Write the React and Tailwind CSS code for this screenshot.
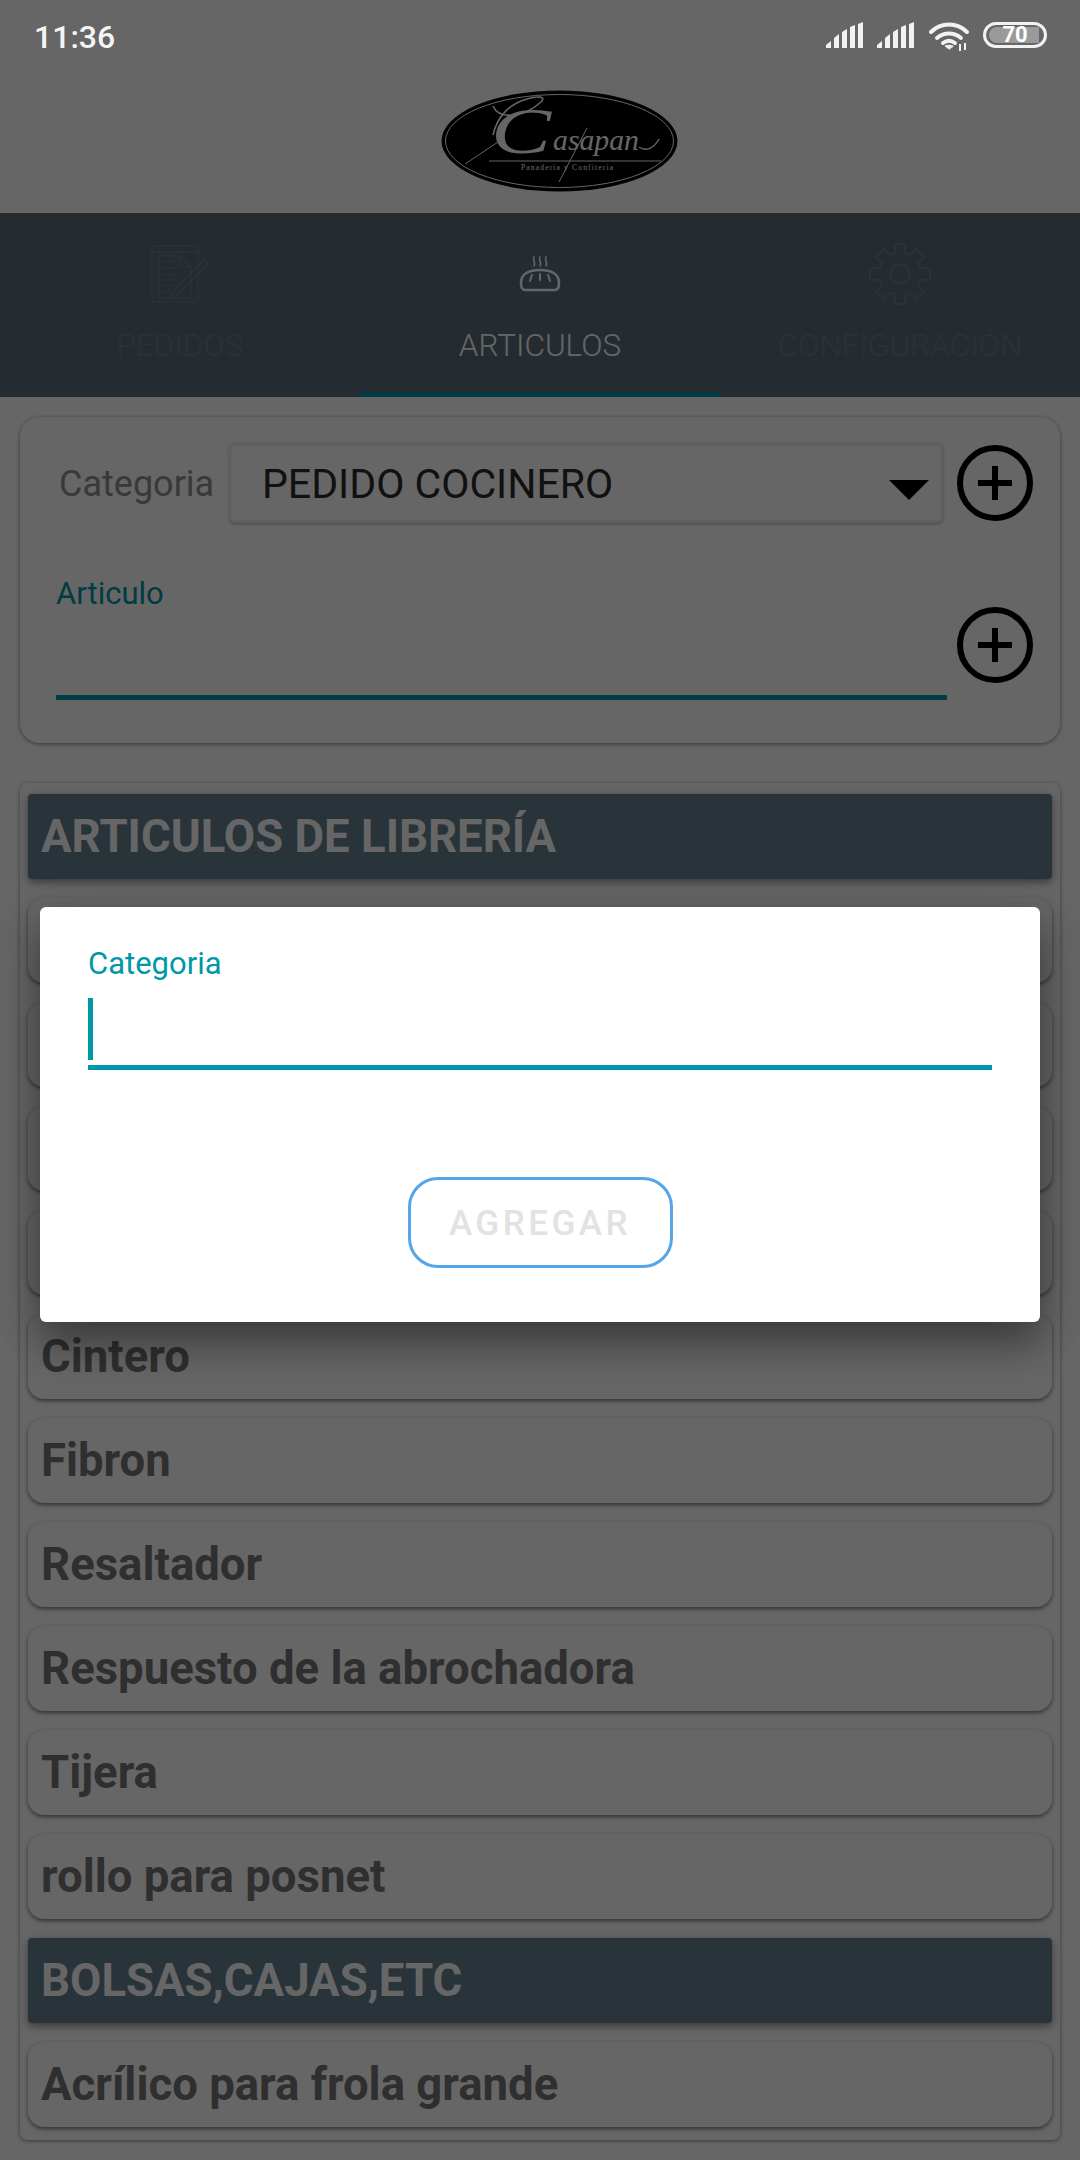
import React from "react";

const GROUPS = [
  { title: "ARTICULOS DE LIBRERÍA", items: ["", "", "", "", "Cintero", "Fibron", "Resaltador", "Respuesto de la abrochadora", "Tijera", "rollo para posnet"] },
  { title: "BOLSAS,CAJAS,ETC", items: ["Acrílico para frola grande"] },
];

// --- status bar icons ---
const SignalIcon = () => (
  <svg width="38" height="26" viewBox="0 0 38 26" fill="#f2f2f2">
    <path d="M0 26v-3l5-4v7z" />
    <path d="M8 26V16l5-4v14z" />
    <path d="M16 26V10l5-3v19z" />
    <path d="M24 26V5l5-2v23z" />
    <path d="M32 26V2l5-2v26z" />
  </svg>
);

const WifiIcon = () => (
  <svg width="40" height="30" viewBox="0 0 40 30" fill="none" stroke="#f2f2f2" strokeWidth="4" strokeLinecap="round">
    <path d="M2 10C12 0 28 0 38 10" />
    <path d="M8 16c7-6 17-6 24 0" />
    <path d="M14 21c4-3 8-3 12 0" />
    <path d="M20 27l-4-3c2-1 6-1 8 0z" fill="#f2f2f2" strokeWidth="1" />
    <path d="M31 22v7M36 21v7" strokeWidth="2" strokeLinecap="butt" />
  </svg>
);

const BatteryIcon = () => (
  <div className="relative w-16 h-[26px] rounded-full border-[3px] border-[#f2f2f2] flex items-center justify-center overflow-hidden">
    <div className="absolute left-[3px] top-[2px] bottom-[2px] w-[50px] rounded-l-full rounded-r-md bg-[#9a9a9a]" />
    <span className="relative text-[22px] leading-none font-bold text-white">70</span>
  </div>
);

// --- tab icons ---
const OrderIcon = () => (
  <svg width="58" height="58" viewBox="0 0 58 58" fill="none" stroke="currentColor" strokeWidth="1.5" strokeLinecap="round" strokeLinejoin="round">
    <rect x="1" y="1" width="46" height="56" rx="1.5" />
    <path d="M1 7h46" />
    <path d="M8 11h21l11 11v31H8z" />
    <path d="M29 11v11h11" />
    <path d="M12 17h12M12 23h14M12 29h18M12 35h14M12 41h10M12 47h6" />
    <path d="M22 47l31-33 4 4-31 33-6 2z" />
  </svg>
);

const BreadIcon = () => (
  <svg width="42" height="36" viewBox="0 0 42 36" fill="none" stroke="currentColor" strokeWidth="2" strokeLinecap="round">
    <path d="M15 1c-2 3 2 5 0 9M21 1c-2 3 2 5 0 9M27 1c-2 3 2 5 0 9" strokeWidth="1.6" />
    <path d="M2 27c0-9 8-13 19-13s19 4 19 13c0 4-1 7-4 7H6c-3 0-4-3-4-7z" strokeWidth="2.6" />
    <path d="M13 19l-2 6M21 18v6M29 19l2 6" />
  </svg>
);

const GearIcon = () => (
  <svg width="62" height="62" viewBox="0 0 62 62" fill="none" stroke="currentColor" strokeWidth="2" strokeLinejoin="round">
    <path d="M26 1h10v9l5 2 6-6 8 8-6 6 2 5h10v12H51l-2 5 6 6-8 8-6-6-5 2v9H26v-9l-5-2-6 6-8-8 6-6-2-5H1V25h10l2-5-6-6 8-8 6 6 5-2z" />
    <circle cx="31" cy="31" r="9.5" />
  </svg>
);

const Logo = () => (
  <svg width="237" height="102" viewBox="0 0 237 102">
    <ellipse cx="118.5" cy="51" rx="118" ry="50.5" fill="#000" />
    <ellipse cx="118.5" cy="51" rx="114" ry="46.5" fill="none" stroke="#fff" strokeWidth="1" />
    <text x="50" y="63" fontFamily="'Liberation Serif', serif" fontStyle="italic" fontSize="66" fill="#fff" textLength="60" lengthAdjust="spacingAndGlyphs">C</text>
    <text x="112" y="60" fontFamily="'Liberation Serif', serif" fontStyle="italic" fontSize="30" fill="#fff" textLength="86" lengthAdjust="spacingAndGlyphs">asapan</text>
    <path d="M198 57c6 4 14 3 20-8" fill="none" stroke="#fff" strokeWidth="1.4" />
    <path d="M52 16c6 14 30 12 48-4 6-6-4-6-14-3-18 5-30 18-34 36" fill="none" stroke="#fff" strokeWidth="1.6" />
    <path d="M24 74L60 50" fill="none" stroke="#fff" strokeWidth="1" />
    <path d="M118 92L146 38" fill="none" stroke="#fff" strokeWidth="1" />
    <path d="M48 71h172" stroke="#fff" strokeWidth="1.2" />
    <text x="80" y="80" fontFamily="'Liberation Serif', serif" fontSize="7.5" fill="#fff" textLength="92">Panaderia y Confiteria</text>
  </svg>
);

const PlusButton = () => (
  <svg width="76" height="76" viewBox="0 0 76 76" fill="none" stroke="#000" strokeWidth="6" className="shrink-0">
    <circle cx="38" cy="38" r="35" />
    <path d="M38 21v34M21 38h34" />
  </svg>
);

const Tab = ({ icon, label, active }) => (
  <div className={`flex flex-col items-center pt-[7px] border-b-[5px] ${active ? "border-[#0097a7] text-white" : "border-transparent text-[#657e8c]"}`}>
    <div className="h-[108px] flex items-center justify-center">{icon}</div>
    <span className="text-[31.5px] leading-9 font-light">{label}</span>
  </div>
);

const App = () => {
  return (
    <div className="relative w-[1080px] h-[2160px] overflow-hidden bg-white font-['Roboto',sans-serif]">
      {/* status bar stays above the dim layer */}
      <div className="relative z-20 h-[72px] flex items-start justify-between pl-[34px] pr-[33px] pt-[22px]">
        <span className="text-[32px] leading-[30px] font-medium text-[#f5f5f5]">11:36</span>
        <div className="flex items-start">
          <SignalIcon />
          <div className="ml-[13px]"><SignalIcon /></div>
          <div className="ml-[14px]"><WifiIcon /></div>
          <div className="ml-[14px]"><BatteryIcon /></div>
        </div>
      </div>

      <div className="h-[141px] flex justify-center pt-[18px] pl-[39px]">
        <Logo />
      </div>

      <div className="grid grid-cols-3 h-[184px] bg-[#5c6e7a]">
        <Tab icon={<OrderIcon />} label="PEDIDOS" />
        <Tab icon={<BreadIcon />} label="ARTICULOS" active />
        <Tab icon={<GearIcon />} label="CONFIGURACIÓN" />
      </div>

      {/* form card */}
      <div className="mx-5 mt-5 h-[326px] rounded-[20px] bg-white pt-[26px] shadow-[0_1px_4px_rgba(0,0,0,0.45)]">
        <div className="flex items-center pl-[39px]">
          <span className="w-[170px] pt-[2px] text-[36px] leading-10 text-[#8f8f8f]">Categoria</span>
          <div className="w-[714px] h-20 flex items-center justify-between border-[3px] border-[#f0f0f0] rounded-md bg-white pl-[30px] pr-[11px] shadow-[0_1px_3px_rgba(0,0,0,0.3)]">
            <span className="pt-[3px] text-[41px] leading-none text-[#2b2b2b]">PEDIDO COCINERO</span>
            <div className="mt-[14px] w-0 h-0 border-l-[20px] border-r-[20px] border-t-[20px] border-l-transparent border-r-transparent border-t-black" />
          </div>
          <div className="ml-[14px]"><PlusButton /></div>
        </div>
        <div className="flex items-start pl-9 mt-[52px]">
          <div className="w-[891px] h-[125px] border-b-[5px] border-[#0097a7]">
            <span className="block pt-[1px] text-[31px] leading-9 text-[#0097a7]">Articulo</span>
          </div>
          <div className="ml-[10px] mt-8"><PlusButton /></div>
        </div>
      </div>

      {/* article list */}
      <div className="mx-5 mt-10 px-2 pt-[11px] pb-[13px] rounded-lg bg-white flex flex-col gap-[19px] shadow-[0_1px_4px_rgba(0,0,0,0.45)]">
        {GROUPS.map((group) => (
          <React.Fragment key={group.title}>
            <div className="h-[85px] flex items-center pl-[13px] pr-3 rounded-sm bg-[#667f91] shadow-[0_3px_8px_rgba(0,0,0,0.45)]">
              <span className="text-[45.5px] leading-none font-bold text-white">{group.title}</span>
            </div>
            {group.items.map((item, i) => (
              <div key={i} className="h-[85px] flex items-center pl-[13px] pr-3 rounded-2xl bg-white shadow-[0_2px_4px_rgba(0,0,0,0.5)]">
                <span className="text-[45.5px] leading-none font-bold text-[#777777]">{item}</span>
              </div>
            ))}
          </React.Fragment>
        ))}
      </div>

      {/* dim layer and dialog */}
      <div className="absolute inset-0 z-10 bg-black/60 flex flex-col items-center pt-[907px]">
        <div className="w-[1000px] h-[415px] rounded-md bg-white px-12 pt-[38px] shadow-[0_24px_38px_rgba(0,0,0,0.3),0_9px_46px_rgba(0,0,0,0.2)]">
          <span className="block pt-[1px] text-[31px] leading-9 text-[#0097a7]">Categoria</span>
          <div className="mt-4 h-[72px] border-b-[5px] border-[#0097a7]">
            <div className="w-[5px] h-[62px] bg-[#0097a7]" />
          </div>
          <div className="mt-[107px] flex justify-center">
            <div className="w-[265px] h-[91px] flex items-center justify-center rounded-[30px] border-[3px] border-[#55a5e8]">
              <span className="pt-1 text-[35px] font-medium tracking-[3.5px] text-[#e2e2e2]">AGREGAR</span>
            </div>
          </div>
        </div>
      </div>
    </div>
  );
};

export default App;
